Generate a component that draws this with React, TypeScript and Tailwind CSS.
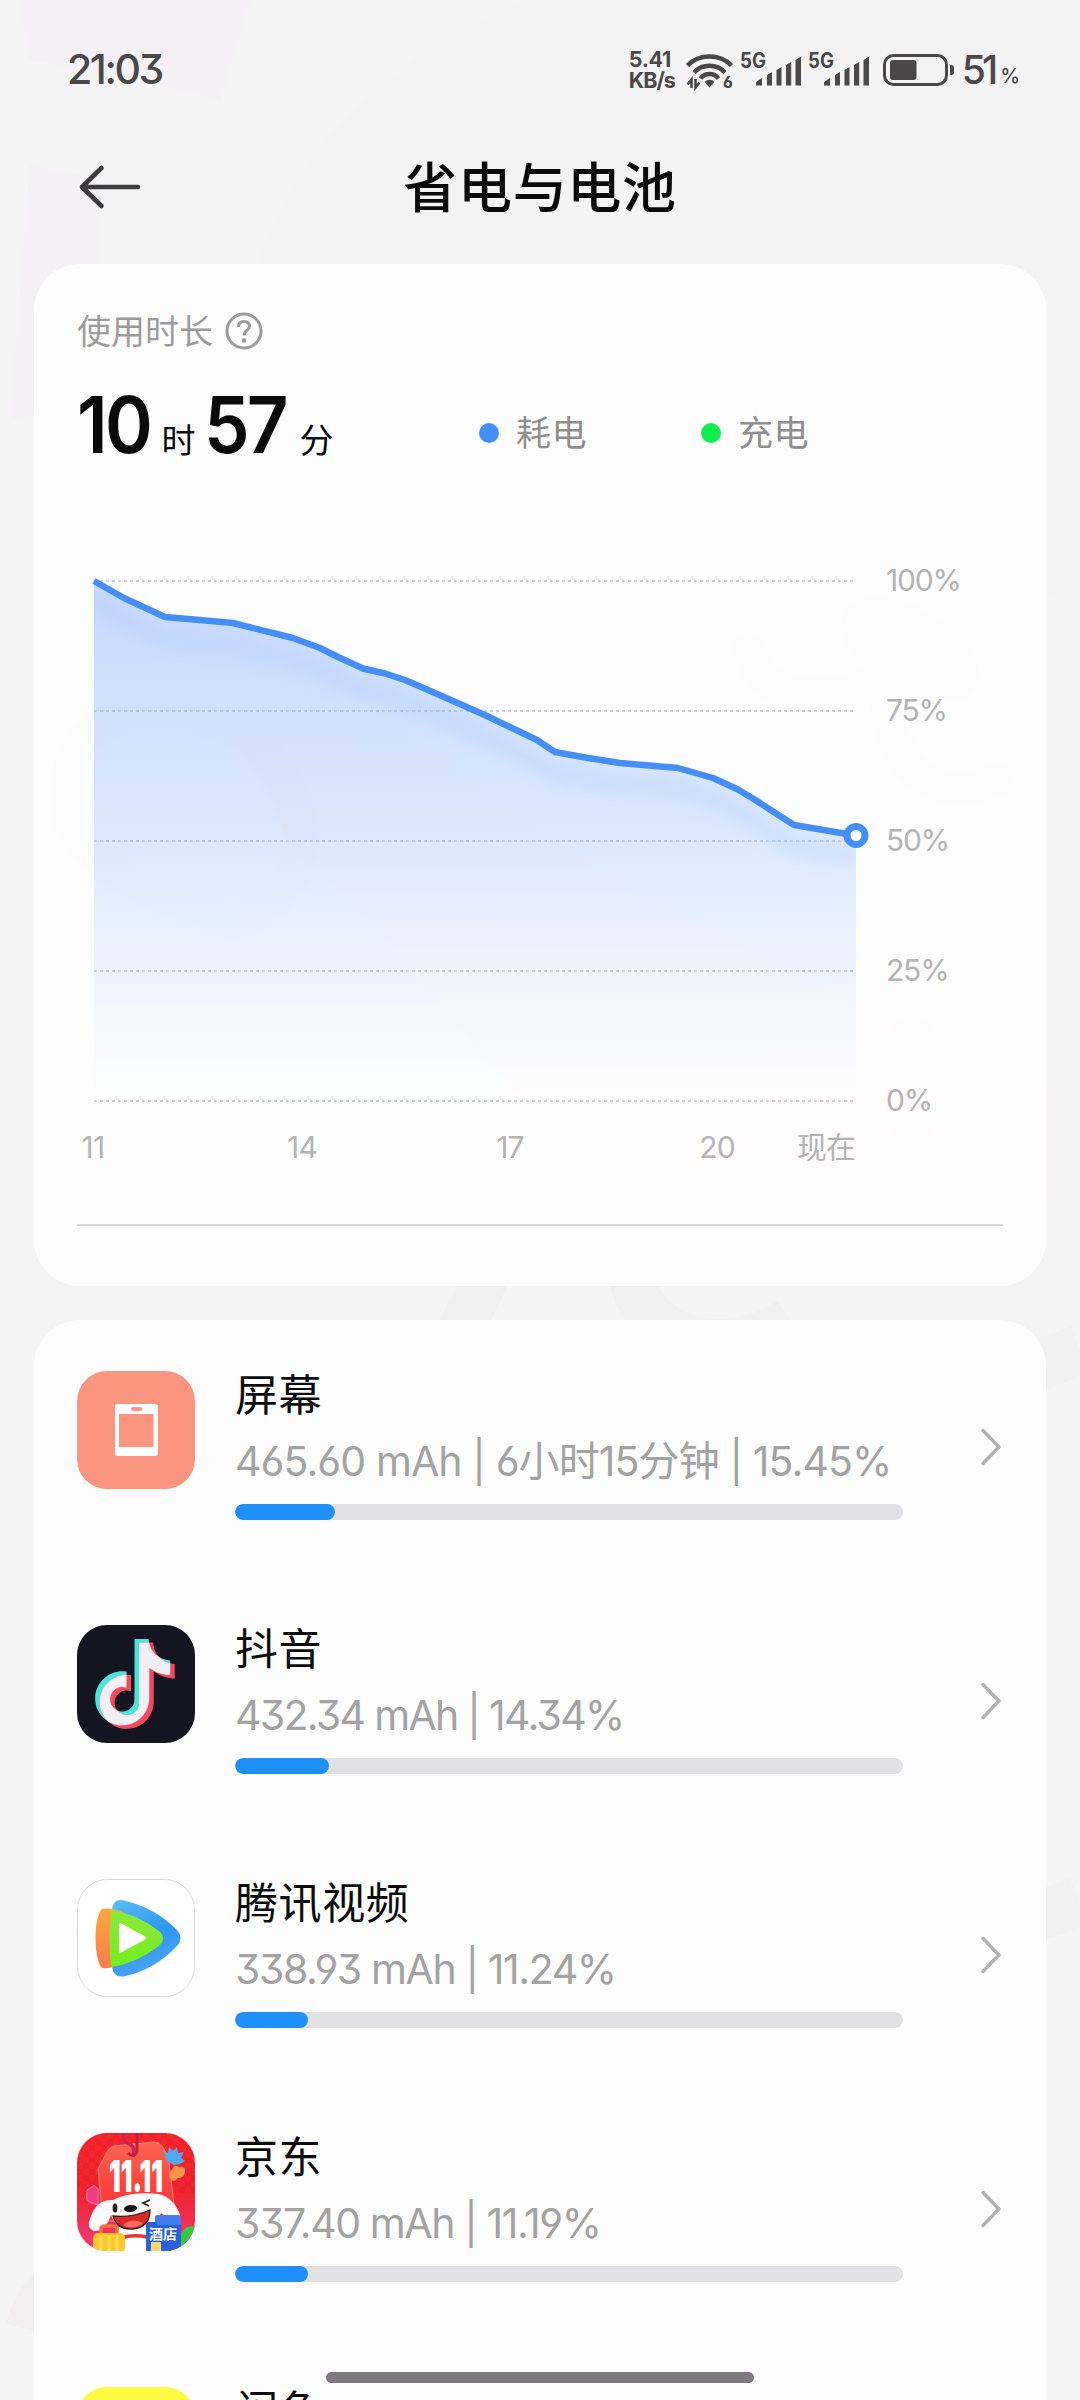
import type { ReactNode } from "react";

type Usage = {
  name: string;
  detail: string;
  tracking: string;
  percent: number;
  icon: ReactNode;
};

const INK = "#4a4849";

// battery level samples, in plot coordinates
const LEVELS: [number, number][] = [
  [17, 21], [48, 38.5], [88, 57], [123, 60], [156, 63], [216, 78], [243, 88],
  [261, 97], [286, 108.5], [308, 113.5], [328, 120], [350, 129.5], [410, 156],
  [460, 180], [478, 192], [511, 198], [543, 203], [601, 208], [636, 218],
  [660, 229], [680, 241], [696, 251.5], [717, 265], [779, 275.5],
];

const GRID = [
  { y: 21, label: "100%" },
  { y: 151, label: "75%" },
  { y: 281, label: "50%" },
  { y: 411, label: "25%" },
  { y: 541, label: "0%" },
];

const HOURS = [
  { x: 16, label: "11" },
  { x: 225, label: "14" },
  { x: 433, label: "17" },
  { x: 640, label: "20" },
  { x: 749, label: "现在" },
];

const TIKTOK =
  "M12.525.02c1.31-.02 2.61-.01 3.91-.02.08 1.53.63 3.09 1.75 4.17 1.12 1.11 2.7 1.62 4.24 1.79v4.03c-1.44-.05-2.89-.35-4.2-.97-.57-.26-1.1-.59-1.62-.93-.01 2.92.01 5.84-.02 8.75-.08 1.4-.54 2.79-1.35 3.94-1.31 1.92-3.58 3.17-5.91 3.21-1.43.08-2.86-.31-4.08-1.03-2.02-1.19-3.44-3.37-3.65-5.71-.02-.5-.03-1-.01-1.49.18-1.9 1.12-3.72 2.58-4.96 1.66-1.44 3.98-2.13 6.15-1.72.02 1.48-.04 2.96-.04 4.44-.99-.32-2.15-.23-3.02.37-.63.41-1.11 1.04-1.36 1.75-.21.51-.15 1.07-.14 1.61.24 1.64 1.82 3.02 3.5 2.87 1.12-.01 2.19-.66 2.77-1.61.19-.33.4-.67.41-1.06.1-1.79.06-3.57.07-5.36.01-4.03-.01-8.05.02-12.07z";

function Wallpaper() {
  return (
    <svg className="absolute inset-0" width="1080" height="2400" viewBox="0 0 1080 2400" fill="none">
      <path d="M20 0H250L220 100L180 90L30 60Z" fill="#f1eef1" opacity=".6" />
      <path d="M30 165L100 180L95 400L10 420Z" fill="#f1eef1" opacity=".6" />
      <path d="M1080 0H520C330 90 240 210 230 420L400 560L1080 600Z" fill="#f2f2f2" opacity=".8" />
      <path d="M70 800C60 700 180 690 250 740C320 800 320 900 230 920C170 900 100 880 70 820Z" stroke="#e0e0e5" strokeWidth="36" opacity=".6" />
      <path d="M230 730L420 740C560 860 760 960 1046 1090V1210L600 1180C500 1100 380 900 300 860Z" fill="#f6e2e5" opacity=".7" />
      <path d="M750 650C760 710 850 700 870 680M885 690C890 790 960 800 995 780" stroke="#e8e8eb" strokeWidth="34" strokeLinecap="round" opacity=".8" />
      <ellipse cx="910" cy="650" rx="76" ry="42" transform="rotate(30 910 650)" fill="#e7e7ea" opacity=".7" />
      <path d="M912 1040V1120" stroke="#ece2e5" strokeWidth="50" strokeLinecap="round" opacity=".6" />
      <path d="M640 1230C600 1310 700 1380 790 1320M500 1140C520 1280 440 1400 250 1540M640 1330C600 1420 640 1520 760 1600" stroke="#ececee" strokeWidth="46" opacity=".6" />
      <path d="M800 1350L940 1400L1080 1350M830 1780C900 1900 980 1950 1080 1900" stroke="#eeedf0" strokeWidth="50" opacity=".5" />
      <path d="M30 2330C60 2230 180 2260 180 2400M420 1930C380 2050 480 2170 640 2400" stroke="#efe9ec" strokeWidth="50" opacity=".5" />
    </svg>
  );
}

function Wifi() {
  return (
    <svg className="ml-[10px] overflow-visible" width="48" height="38" viewBox="0 0 48 38" fill="none" stroke={INK} strokeWidth="4.4">
      <path d="M2.5 14.5C14 2.5 35 2.5 46.5 14.5" />
      <path d="M9 21.5C17 12.5 32 12.5 40 21.5" />
      <path d="M15.5 27.5C20 21.5 29 21.5 33.5 27.5" />
      <path d="M19.5 31Q24.5 26.5 29.5 31L24.5 36.5Z" fill={INK} stroke="none" />
      <path d="M6.5 37V28.5L2.5 33.5M10.5 28V36.5L14.5 31.5" strokeWidth="2.6" />
      <text x="38" y="37" fill={INK} stroke="none" fontSize="15.5" fontWeight="800">6</text>
    </svg>
  );
}

function Signal() {
  return (
    <svg className="ml-[7px] overflow-visible" width="61" height="36" viewBox="0 0 61 36" fill={INK}>
      <text x="0" y="16" fontSize="21" fontWeight="700" textLength="26" lengthAdjust="spacingAndGlyphs">5G</text>
      <path d="M16 33.5V30L22 26V33.5ZM27 33.5V23L32 20V33.5ZM36.5 33.5V18L41.5 15V33.5ZM46 33.5V13L51.2 10V33.5ZM55.5 33.5V8L61 4.5V33.5Z" />
    </svg>
  );
}

function StatusBar() {
  return (
    <div className="flex h-[139px] items-center pr-[60px] pl-[67px] text-[#4a4849]">
      <span className="text-[41px] leading-none font-medium tracking-[-2.4px]">21:03</span>
      <div className="ml-auto flex items-center">
        <div className="flex flex-col text-[21.5px] leading-[20.5px] font-bold">
          <span className="tracking-[-0.3px]">5.41</span>
          <span className="tracking-[-1px]">KB/s</span>
        </div>
        <Wifi />
        <Signal />
        <Signal />
        <svg className="ml-[14px]" width="72" height="32" viewBox="0 0 72 32" fill="none">
          <rect x="1.5" y="1.5" width="62" height="29" rx="9" stroke={INK} strokeWidth="3" />
          <rect x="7" y="6" width="26.5" height="20" rx="3" fill={INK} />
          <path d="M67 11Q71 11 71 13V19Q71 21 67 21Z" fill={INK} />
        </svg>
        <span className="ml-[7px] text-[39px] leading-none font-medium tracking-[-4px]">51</span>
        <span className="mt-[12px] ml-[6px] text-[20px] leading-none font-medium">%</span>
      </div>
    </div>
  );
}

function Header() {
  return (
    <header className="relative flex h-[125px] items-center justify-center pb-[26px]">
      <svg className="absolute top-[25px] left-[78px]" width="64" height="46" viewBox="0 0 64 46" fill="none" stroke="#3c3c3e" strokeWidth="4.6" strokeLinecap="round" strokeLinejoin="round">
        <path d="M60 23H4M23.5 4L4 23L23.5 42" />
      </svg>
      <h1 className="text-[54px] leading-none font-medium tracking-[0.7px] text-[#0a0a0a]">省电与电池</h1>
    </header>
  );
}

function Legend({ dot, label }: { dot: string; label: string }) {
  return (
    <div className="mt-[16px] flex w-[222px] items-center gap-[17px]">
      <span className={`size-[20px] rounded-full ${dot}`} />
      <span className="text-[35px] leading-none tracking-[0.5px] text-[#8f8f8f]">{label}</span>
    </div>
  );
}

function BigNumber({ children }: { children: string }) {
  return (
    <span className="-mr-[8px] inline-block origin-left scale-x-[0.93] text-[78px] font-[560] tracking-[-3px]">
      {children}
    </span>
  );
}

function Chart() {
  const line = LEVELS.map(([x, y], i) => `${i ? "L" : "M"}${x} ${y}`).join("");
  const area = `${line}V541H17Z`;
  const [endX, endY] = LEVELS[LEVELS.length - 1];

  return (
    <svg className="block" width="926" height="610" viewBox="0 0 926 610" fill="none">
      <defs>
        <linearGradient id="area" x1="0" y1="21" x2="0" y2="541" gradientUnits="userSpaceOnUse">
          <stop offset="0" stopColor="#5c8ffa" stopOpacity=".34" />
          <stop offset=".5" stopColor="#5c96f8" stopOpacity=".2" />
          <stop offset="1" stopColor="#6fb0ff" stopOpacity="0" />
        </linearGradient>
        <clipPath id="under"><path d={area} /></clipPath>
        <filter id="soft" x="-10%" y="-20%" width="120%" height="150%"><feGaussianBlur stdDeviation="6" /></filter>
      </defs>
      {GRID.map(g => (
        <g key={g.label}>
          <path d={`M17 ${g.y}H778`} stroke="#c4c4c6" strokeWidth="1.6" strokeDasharray="3 3" />
          <text x="809" y={g.y + 10} fontSize="30" fill="#b4b4b4" letterSpacing="-1.2">{g.label}</text>
        </g>
      ))}
      <path d={area} fill="url(#area)" />
      <g clipPath="url(#under)">
        <path d={line} transform="translate(0 22)" stroke="#9cc4f5" strokeOpacity=".18" strokeWidth="20" filter="url(#soft)" />
      </g>
      <path d={line} stroke="#448ff5" strokeWidth="6.5" strokeLinejoin="round" />
      <circle cx={endX} cy={endY} r="9" fill="#fff" stroke="#448ff5" strokeWidth="7" />
      {HOURS.map(h => (
        <text key={h.label} x={h.x} y="597.5" fontSize="30" fill="#b4b4b4" textAnchor="middle" letterSpacing="-.8">{h.label}</text>
      ))}
    </svg>
  );
}

function ScreenIcon() {
  return (
    <svg width="118" height="118" viewBox="0 0 118 118">
      <rect width="118" height="118" rx="30" fill="#fa957f" />
      <rect x="38" y="33" width="43" height="52" rx="3" fill="#fff" />
      <rect x="42" y="43" width="34.5" height="33" fill="#fa957f" />
      <rect x="54" y="36" width="11.5" height="4" rx="2" fill="#fa957f" />
    </svg>
  );
}

function DouyinIcon() {
  return (
    <svg width="118" height="118" viewBox="0 0 118 118">
      <defs>
        <clipPath id="note"><path d={TIKTOK} transform="translate(12.5 14) scale(3.6)" /></clipPath>
      </defs>
      <rect width="118" height="118" rx="30" fill="#141520" />
      <path d={TIKTOK} transform="translate(12.5 14) scale(3.6)" fill="#46e8dc" />
      <path d={TIKTOK} transform="translate(17 17.5) scale(3.6)" fill="#f4485f" />
      <g clipPath="url(#note)">
        <path d={TIKTOK} transform="translate(17 17.5) scale(3.6)" fill="#f1eff3" />
      </g>
    </svg>
  );
}

function TencentIcon() {
  return (
    <svg width="118" height="118" viewBox="0 0 118 118">
      <defs>
        <linearGradient id="tb" x1="0" y1="0" x2=".4" y2="1">
          <stop stopColor="#5bc0f8" /><stop offset=".6" stopColor="#2b96ef" /><stop offset="1" stopColor="#4aa5f5" />
        </linearGradient>
        <linearGradient id="to" x1="0" y1="0" x2="0" y2="1">
          <stop stopColor="#fca63c" /><stop offset="1" stopColor="#fb7c4d" />
        </linearGradient>
        <linearGradient id="tg" x1="0" y1="0" x2="0" y2="1">
          <stop stopColor="#8fe83c" /><stop offset="1" stopColor="#72ee1c" />
        </linearGradient>
      </defs>
      <rect x=".5" y=".5" width="117" height="117" rx="30" fill="#fff" stroke="#dcdadd" />
      <path d="M35 31Q36 18 49 22Q78 29 99 50Q108 59 99 68Q78 90 49 97Q36 100 35 87Q31 59 35 31Z" fill="url(#tb)" />
      <path d="M25 30Q36 28 48 34V84Q36 90 25 89Q21 86 19 70Q18 58 19 48Q21 33 25 30Z" fill="url(#to)" />
      <path d="M34 31Q58 34 82 52Q90 59 82 67Q58 85 34 88Q31 59 34 31Z" fill="url(#tg)" />
      <path d="M42 46Q42 43 45 45L68 57.5Q70 59 68 60.5L45 73Q42 75 42 72Z" fill="#fff" />
    </svg>
  );
}

function JdIcon() {
  return (
    <svg width="118" height="118" viewBox="0 0 118 118">
      <defs>
        <clipPath id="jd"><rect width="118" height="118" rx="30" /></clipPath>
        <linearGradient id="jbg" x1="0" y1="0" x2="0" y2="1">
          <stop stopColor="#f8252a" /><stop offset=".5" stopColor="#f0242f" /><stop offset="1" stopColor="#f03a78" />
        </linearGradient>
        <linearGradient id="tag" x1="0" y1="0" x2="0" y2="1">
          <stop stopColor="#fb6350" /><stop offset="1" stopColor="#f92c32" />
        </linearGradient>
        <pattern id="check" width="12" height="12" patternUnits="userSpaceOnUse">
          <path d="M0 0H6V6H0ZM6 6H12V12H6Z" fill="#d91a28" opacity=".3" />
        </pattern>
      </defs>
      <g clipPath="url(#jd)">
        <rect width="118" height="118" fill="url(#jbg)" />
        <rect width="118" height="60" fill="url(#check)" />
        <path d="M21 36L31 17Q33 14 37 13L77 9Q81 9 84 12L91 22L99 88H26Z" fill="url(#tag)" stroke="#fd8a72" strokeWidth="1" />
        <path d="M46 0Q45 8 52 11T56 24" stroke="#c8225a" strokeWidth="3.5" fill="none" />
        <path d="M60 0V18Q57 26 51 20" stroke="#c3203f" strokeWidth="3" fill="none" />
        <path d="M86 18L91 20L92 14L96 18L100 14L101 20L107 19L104 25L108 28L103 31L97 32L90 28Z" fill="#50a9ee" />
        <path d="M95 37Q97 31 102 34Q109 33 108 39Q107 45 101 45Q96 51 93 45Q91 40 95 37Z" fill="#fb9447" />
        <path d="M10 61Q9 55 14 55Q17 50 21 56V72L12 69Q8 65 10 61Z" fill="#ee3d83" stroke="#f77cab" strokeWidth="1" />
        <text x="32" y="59" fontSize="44" fontWeight="900" fill="#fff" textLength="54" lengthAdjust="spacingAndGlyphs">11.11</text>
        <path d="M104 101Q108 92 118 93V118H104Z" fill="#35c93f" />
        {/* mascot */}
        <path d="M42 92L84 88L88 118H38Z" fill="#fff" />
        <path d="M36 67Q52 58 82 61Q97 65 103 82Q104 90 96 88L84 80Q76 98 58 98Q40 98 34 82Q28 99 17 98Q9 95 13 86Q19 66 36 67Z" fill="#fbfafb" />
        <ellipse cx="38" cy="75" rx="2.4" ry="4.5" fill="#222" />
        <path d="M73 67L66 70L72 73" stroke="#222" strokeWidth="1.8" fill="none" />
        <ellipse cx="53.5" cy="75.5" rx="6.5" ry="3.5" fill="#15151c" transform="rotate(-6 53.5 75.5)" />
        <path d="M36 83Q55 85 73 77Q73 94 56 96Q40 97 36 83Z" fill="#d92a28" stroke="#2b1518" strokeWidth="1.3" />
        <path d="M46 92Q55 84 66 90Q56 98 46 92Z" fill="#ff6a5c" />
        <path d="M44 105Q56 101 70 104" stroke="#e5373b" strokeWidth="3.5" fill="none" />
        <path d="M24 101V96Q24 93 28 93H36Q40 93 40 96V101" stroke="#f0703f" strokeWidth="3.5" fill="none" />
        <rect x="16" y="100" width="32" height="20" rx="5" fill="#fdc92f" />
        <path d="M24 103V118M32 103V118M40 103V118" stroke="#fbe04e" strokeWidth="3" />
        <path d="M78 84Q78 82 81 82H101Q104 82 104 85V118H78Z" fill="#3f7df0" />
        <path d="M69 92Q69 89 72 89H80V118H69Z" fill="#2a5fd8" />
        <path d="M69 92H104V118H69Z" fill="#2a5fdd" />
        <text x="72" y="105.5" fontSize="14" fontWeight="700" fill="#fff">酒店</text>
        <rect x="74" y="109" width="10" height="9" fill="#fcd66a" />
      </g>
    </svg>
  );
}

function XianyuIcon() {
  return (
    <svg width="118" height="118" viewBox="0 0 118 118">
      <rect width="118" height="118" rx="30" fill="#fdfa3f" />
    </svg>
  );
}

const APPS: Usage[] = [
  { name: "屏幕", detail: "465.60 mAh | 6小时15分钟 | 15.45%", tracking: "tracking-[-0.9px]", percent: 15, icon: <ScreenIcon /> },
  { name: "抖音", detail: "432.34 mAh | 14.34%", tracking: "tracking-[-1.7px]", percent: 14, icon: <DouyinIcon /> },
  { name: "腾讯视频", detail: "338.93 mAh | 11.24%", tracking: "tracking-[-1.4px]", percent: 11, icon: <TencentIcon /> },
  { name: "京东", detail: "337.40 mAh | 11.19%", tracking: "tracking-[-1.4px]", percent: 11, icon: <JdIcon /> },
  { name: "闲鱼", detail: "", tracking: "", percent: 0, icon: <XianyuIcon /> },
];

function UsageRow({ app }: { app: Usage }) {
  return (
    <li className="flex h-[254px] shrink-0 items-start">
      {app.icon}
      <div className="ml-[40px] flex w-[668px] flex-col">
        <span className="text-[43px] leading-[48px] tracking-[0.6px] text-[#0c0c0c]">{app.name}</span>
        <span className={`mt-[14px] h-[56px] text-[41px] leading-[56px] whitespace-nowrap text-[#a3a3a3] ${app.tracking}`}>
          {app.detail}
        </span>
        <div className="mt-[15px] h-4 overflow-hidden rounded-full bg-[#e1e1e3]">
          <div className="h-full rounded-full bg-[#1f90fa]" style={{ width: `${app.percent}%` }} />
        </div>
      </div>
      <svg className="mt-[55px] ml-auto" width="24" height="42" viewBox="0 0 24 42" fill="none" stroke="#b3b3b3" strokeWidth="3.5" strokeLinecap="round" strokeLinejoin="round">
        <path d="M4 4.5L20 21L4 37.5" />
      </svg>
    </li>
  );
}

export default function App() {
  return (
    <div className="relative h-[2400px] w-[1080px] overflow-hidden bg-[#f4f4f5] font-['Inter','Noto_Sans_CJK_SC',sans-serif] [font-feature-settings:'cv03','cv04','cv09']">
      <Wallpaper />
      <div className="relative flex flex-col">
        <StatusBar />
        <Header />

        <section className="mx-[34px] flex h-[1022px] flex-col rounded-[46px] bg-white/85 px-[43px] pt-[46px]">
          <div className="flex h-[41px] items-center gap-[12px]">
            <span className="pt-[2px] text-[34px] leading-none text-[#9c9c9c]">使用时长</span>
            <svg width="38" height="38" viewBox="0 0 38 38" fill="none" stroke="#9c9c9c" strokeWidth="3">
              <circle cx="19" cy="19" r="17" />
              <path d="M13.5 15Q13.5 9.5 19 9.5T24.5 14.5C24.5 18 19 18.5 19 23.5" />
              <path d="M17 26.5H21V30.5H17Z" fill="#9c9c9c" stroke="none" />
            </svg>
          </div>
          <div className="mt-[29px] flex h-[90px] items-center">
            <div className="flex w-[402px] items-baseline leading-none text-[#0a0a0a]">
              <BigNumber>10</BigNumber>
              <span className="ml-[14px] text-[34px]">时</span>
              <span className="w-[9px]" />
              <BigNumber>57</BigNumber>
              <span className="ml-[15px] text-[34px]">分</span>
            </div>
            <Legend dot="bg-[#428ff8]" label="耗电" />
            <Legend dot="bg-[#12ee50]" label="充电" />
          </div>
          <div className="mt-[90px]">
            <Chart />
          </div>
          <div className="mt-[54px] h-[2px] bg-[#dbdbda]" />
        </section>

        <ul className="mx-[34px] mt-[34px] flex h-[1200px] flex-col rounded-t-[46px] bg-white/85 px-[43px] pt-[51px]">
          {APPS.map(app => (
            <UsageRow key={app.name} app={app} />
          ))}
        </ul>
      </div>
      {/* gesture bar */}
      <div className="absolute bottom-[17px] left-[326px] h-[11px] w-[428px] rounded-full bg-[#7d7a7d]" />
    </div>
  );
}
